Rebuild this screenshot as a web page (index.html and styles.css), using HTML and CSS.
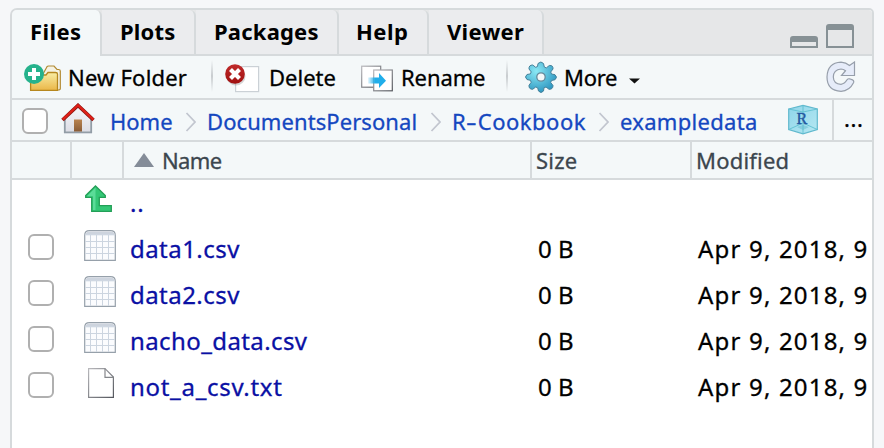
FILE: index.html
```
<!DOCTYPE html>
<html lang="en">
<head>
<meta charset="utf-8">
<title>Files</title>
<link rel="stylesheet" href="styles.css">
</head>
<body>
<svg class="defs" width="0" height="0" aria-hidden="true">
  <defs>
    <linearGradient id="gold" x1="0" y1="0" x2="0" y2="1"><stop offset="0" stop-color="#f8eda4"/><stop offset="1" stop-color="#eab748"/></linearGradient>
    <linearGradient id="red" x1="0" y1="0" x2="0" y2="1"><stop offset="0" stop-color="#c02b2b"/><stop offset="1" stop-color="#a01010"/></linearGradient>
    <linearGradient id="page" x1="0" y1="0" x2="1" y2="1"><stop offset="0" stop-color="#b8b8bc"/><stop offset="1" stop-color="#55585e"/></linearGradient>
    <linearGradient id="arrow" x1="0" y1="0" x2="1" y2="0"><stop offset="0" stop-color="#20aeea" stop-opacity="0.1"/><stop offset="0.4" stop-color="#20aeea"/></linearGradient>
    <radialGradient id="gear" cx="0.35" cy="0.3" r="0.75"><stop offset="0" stop-color="#8be9f5"/><stop offset="1" stop-color="#2b94bf"/></radialGradient>
    <linearGradient id="wall" x1="0" y1="0" x2="0" y2="1"><stop offset="0" stop-color="#f6f6fa"/><stop offset="1" stop-color="#dcdce4"/></linearGradient>
    <linearGradient id="door" x1="0" y1="0" x2="0" y2="1"><stop offset="0" stop-color="#b98350"/><stop offset="1" stop-color="#8a5c38"/></linearGradient>
    <linearGradient id="cube" x1="0" y1="0" x2="1" y2="1"><stop offset="0" stop-color="#8fd5ea"/><stop offset="1" stop-color="#b5e8f2"/></linearGradient>
    <g id="grid">
      <path d="M.7 30.400V5.500Q.7 .7 5.500 .7H26.500Q31.300 .7 31.300 5.500V30.400Z" fill="#fbfcfe" stroke="#96a0aa" stroke-width="1.200"/>
      <path d="M1.400 4.800Q2 1.400 6 1.400H26Q30 1.400 30.600 4.800Z" fill="#cdd4de"/>
      <path d="M6.500 5V29.800M12.500 5V29.800M18.500 5V29.800M24.500 5V29.800M1.400 4.800H30.600M1.400 11.500H30.600M1.400 17.500H30.600M1.400 23.500H30.600" fill="none" stroke="#ccd5e0" stroke-width="1"/>
    </g>
  </defs>
</svg>
<main class="pane">
  <nav class="tabs">
    <a class="tab tab-files active"><span>Files</span></a>
    <a class="tab tab-plots"><span>Plots</span></a>
    <a class="tab tab-packages"><span>Packages</span></a>
    <a class="tab tab-help"><span>Help</span></a>
    <a class="tab tab-viewer"><span>Viewer</span></a>
    <svg class="window-controls" width="64" height="24" viewBox="0 0 64 24">
      <path d="M0 24V15Q0 12 3 12H25Q28 12 28 15V24ZM2 18V22H26V18Z" fill="#879195" fill-rule="evenodd"/>
      <path d="M36 24V3Q36 0 39 0H61Q64 0 64 3V24ZM38 6V22H62V6Z" fill="#879195" fill-rule="evenodd"/>
    </svg>
  </nav>
  <div class="toolbar">
    <button class="tool new-folder">
      <svg width="38" height="28" viewBox="0 0 38 28">
        <path d="M19 10L23 2.700Q23.500 2 24.500 2H30L33 5.500H34.500Q36.300 5.500 36.300 7V24.500Q36.300 26 34 26H20Z" fill="#f5f2e2" stroke="#b28a32" stroke-width="1.200"/>
        <path d="M6.600 26.300V11H22L24 8.500H31.500Q33.500 8.500 33.500 10V26.300Z" fill="url(#gold)" stroke="#b6871e" stroke-width="1.300"/>
        <circle cx="10" cy="10" r="10" fill="#25b28c"/>
        <path d="M10 4V16M4 10H16" stroke="#fff" stroke-width="4"/>
      </svg>
      <span>New Folder</span>
    </button>
    <i class="sep sep-one"></i>
    <button class="tool delete">
      <svg width="36" height="30" viewBox="0 0 36 30">
        <rect x="10.600" y="2.600" width="23" height="25" fill="#fff" stroke="#cbd1d6" stroke-width="1.200"/>
        <circle cx="11" cy="12" r="9.500" fill="#777" opacity=".3"/>
        <circle cx="10" cy="10" r="9.800" fill="url(#red)"/>
        <path d="M5.500 5.500L14.500 14.500M14.500 5.500L5.500 14.500" stroke="#fff" stroke-width="4.200"/>
      </svg>
      <span>Delete</span>
    </button>
    <button class="tool rename">
      <svg width="32" height="28" viewBox="0 0 32 28">
        <rect x=".700" y="1.200" width="19" height="21" fill="#fff" stroke="url(#page)" stroke-width="1.200"/>
        <rect x="12.700" y="5" width="18.600" height="20.800" fill="#fff" stroke="url(#page)" stroke-width="1.200"/>
        <path d="M7 12.500H18V8L25 15.700L18 23V18.500H7Z" fill="url(#arrow)"/>
      </svg>
      <span>Rename</span>
    </button>
    <i class="sep sep-two"></i>
    <button class="tool more">
      <svg width="32" height="32" viewBox="0 0 32 32">
        <path d="M13 2.500Q16 -.5 18.500 2.500L19.300 6L21.300 6.900L24.300 4.500Q28.300 4 28 8L25.700 11L26.500 13L30 13.700Q33 16.200 30 18.700L26.500 19.500L25.700 21.500L28 24.500Q28 28.500 24 28.300L21 26L19 26.800L18.500 30Q16 33 13.500 30L12.700 26.800L10.700 26L7.700 28.300Q3.700 28.300 4 24.300L6.200 21.300L5.400 19.300L2 18.500Q-1 16 2 13.500L5.400 12.900L6.200 10.900L4 8Q3.700 4 7.700 4L10.700 6.300L12.500 5.500Z" fill="url(#gear)" stroke="#45819a" stroke-width="1"/>
        <circle cx="16" cy="16" r="4.200" fill="#f4f8f9" stroke="#66899a" stroke-width="1.300"/>
      </svg>
      <span>More</span>
      <svg class="caret" width="11" height="6" viewBox="0 0 11 6"><path d="M0 .500H11L5.500 5.600Z" fill="#111"/></svg>
    </button>
    <svg class="refresh" width="30" height="32" viewBox="0 0 30 32">
      <path d="M23.500 4.500L28.500 1V14.500H15.500L19.500 9.700Q17.500 8 15 8Q7.500 8.600 7.300 16Q7.500 23 15 23.300Q18.500 23 21 18.800Q22 17.500 23.500 17.800L26.500 18.900Q28.300 19.800 27.500 21.800Q23.500 30 15 30.300Q1 29.500 1 16Q1.500 1.800 15 1.200Q20 1.500 23.500 4.500Z" fill="#e6ecf9" stroke="#979fab" stroke-width="1.200"/>
    </svg>
  </div>
  <div class="crumbs">
    <i class="check"></i>
    <svg class="home" width="34" height="32" viewBox="0 0 34 32">
      <path d="M3 16L17 3L31 16V30.300H3Z" fill="url(#wall)"/>
      <path d="M3.800 16V29.400H30.200V16" fill="none" stroke="#929da6" stroke-width="1.800"/>
      <rect x="13" y="16.500" width="8" height="12" fill="url(#door)"/>
      <path d="M1.500 17L17 2.400L32.500 17" fill="none" stroke="#8b1712" stroke-width="3.600"/>
      <path d="M1.700 16.600L17 2.200L32.300 16.600" fill="none" stroke="#e02018" stroke-width="2.200"/>
    </svg>
    <a class="c-home">Home</a>
    <svg class="chev" width="12" height="20" viewBox="0 0 12 20"><path d="M1.500 1L10 10L1.500 19" fill="none" stroke="#c2c6cf" stroke-width="1.800"/></svg>
    <a class="c-docs">DocumentsPersonal</a>
    <svg class="chev" width="12" height="20" viewBox="0 0 12 20"><path d="M1.500 1L10 10L1.500 19" fill="none" stroke="#c2c6cf" stroke-width="1.800"/></svg>
    <a class="c-book">R<span class="hyphen">-</span>Cookbook</a>
    <svg class="chev" width="12" height="20" viewBox="0 0 12 20"><path d="M1.500 1L10 10L1.500 19" fill="none" stroke="#c2c6cf" stroke-width="1.800"/></svg>
    <a class="c-data">exampledata</a>
    <svg class="project" width="30" height="32" viewBox="0 0 30 32">
      <path d="M.700 5L15 1.300L29.300 5V25.500L15 29.800L.700 25.500Z" fill="url(#cube)" stroke="#61b9ce" stroke-width="1.200"/>
      <path d="M.700 5L15 8L29.300 5M15 1V30M.700 25.500L15 19L29.300 25.500" fill="none" stroke="#5fbfd0" stroke-width=".9"/>
      <path d="M9 23L15 21L21 23L15 26Z" fill="#62bccd" opacity=".5"/>
      <text x="8.500" y="19.500" class="project-r">R</text>
    </svg>
    <button class="ellipsis">...</button>
  </div>
  <div class="grid-row head">
    <span></span><span></span>
    <span class="h-name"><svg width="20" height="14" viewBox="0 0 20 14"><path d="M0 14L10 0L20 14Z" fill="#848c98"/></svg><b>Name</b></span>
    <span class="h-size"><b>Size</b></span>
    <span class="h-mod"><b>Modified</b></span>
  </div>
  <div class="grid-row row parent">
    <span></span>
    <svg class="up" width="27" height="28" viewBox="0 0 27 28">
      <path d="M10.500 1L20.300 10.500V12.300H14.300V20.700H26.300V26.300H6.700V12.300H.700V10.500Z" fill="#34c776" stroke="#239f57" stroke-width="1.300"/>
      <path d="M10.500 2.500L2 11.300H8V25H10.500Z" fill="#5bdc98"/>
    </svg>
    <a class="dots">..</a>
  </div>
  <div class="grid-row row"><i class="check"></i><svg class="file" width="32" height="32" viewBox="0 0 32 32"><use href="#grid"/></svg><a class="f-data">data1.csv</a><span class="size">0 B</span><span class="date">Apr 9, 2018, 9</span></div>
  <div class="grid-row row"><i class="check"></i><svg class="file" width="32" height="32" viewBox="0 0 32 32"><use href="#grid"/></svg><a class="f-data">data2.csv</a><span class="size">0 B</span><span class="date">Apr 9, 2018, 9</span></div>
  <div class="grid-row row"><i class="check"></i><svg class="file" width="32" height="32" viewBox="0 0 32 32"><use href="#grid"/></svg><a class="f-nacho">nacho_data.csv</a><span class="size">0 B</span><span class="date">Apr 9, 2018, 9</span></div>
  <div class="grid-row row"><i class="check"></i><svg class="file" width="32" height="32" viewBox="0 0 32 32"><path d="M4.600 .600H21L29.400 9V29.400H4.600Z" fill="#fff" stroke="url(#page)" stroke-width="1.200"/><path d="M21 .600V9.300H29.400" fill="none" stroke="#85878b" stroke-width="1.200"/></svg><a class="f-not">not_a_csv.txt</a><span class="size">0 B</span><span class="date">Apr 9, 2018, 9</span></div>
</main>
</body>
</html>
```
FILE: styles.css
```
* { box-sizing: border-box; }
body {
  margin: 0;
  height: 448px;
  overflow: hidden;
  padding: 8px 10px 0;
  background: #f6f7f9;
  color: #000;
  font: 22px/30px "Noto Sans", sans-serif;
  white-space: nowrap;
  -webkit-text-stroke: 0.3px;
}
.defs { position: absolute; }
svg { display: block; flex: none; }
button { border: 0; padding: 0; background: none; font: inherit; color: inherit; }
.pane {
  width: 864px;
  height: 460px;
  border: 2px solid #d6dadc;
  border-radius: 7px 5px 0 0;
  background: #fff;
  overflow: hidden;
}
.tabs { display: flex; height: 46px; background: #e6e7e8; }
.tab {
  height: 46px;
  padding-top: 6px;
  border-right: 2px solid #d6dadc;
  border-bottom: 2px solid #d6dadc;
  border-top-right-radius: 6px;
  background: #ebecee;
  font-weight: 700;
  -webkit-text-stroke: 0;
}
.tab.active { background: #f4f8f9; border-bottom: 0; }
.tab-files { width: 90px; padding-left: 18px; letter-spacing: .4px; }
.tab-plots { width: 94px; padding-left: 18px; letter-spacing: .2px; }
.tab-packages { width: 143px; padding-left: 18px; letter-spacing: .2px; }
.tab-help { width: 90px; padding-left: 17px; letter-spacing: .5px; }
.tab-viewer { width: 115px; padding-left: 18px; letter-spacing: .3px; }
.tabs::after { content: ""; order: 1; flex: 1; border-bottom: 2px solid #d6dadc; }
.window-controls { order: 2; width: 82px; height: 46px; padding: 14px 18px 6px 0; border-bottom: 2px solid #d6dadc; }
.toolbar {
  display: flex;
  align-items: flex-start;
  height: 44px;
  background: #f4f8f9;
  border-bottom: 2px solid #d6dadc;
}
.tool { display: flex; text-align: left; height: 42px; }
.tool span { padding-top: 6px; }
.tool svg { margin-top: 8px; }
.new-folder { width: 199px; padding-left: 12px; letter-spacing: .2px; }
.new-folder span { margin-left: 6px; }
.sep { width: 2px; height: 32px; margin-top: 4px; background: linear-gradient(#f4f8f9, #c8cccf 50%, #f4f8f9); }
.delete { width: 148px; padding-left: 12px; }
.delete span { margin-left: 8px; }
.rename { width: 145px; letter-spacing: -.1px; }
.rename svg { margin-top: 9px; }
.rename span { margin-left: 8px; }
.more { width: 318px; padding-left: 17px; letter-spacing: -.3px; }
.more svg { margin-top: 5px; }
.more span { width: 65px; margin-left: 7px; }
.more .caret { margin-top: 22px; margin-left: 0; }
.refresh { margin-top: 5px; }
.crumbs {
  display: flex;
  height: 42px;
  background: #f4f8f9;
  border-bottom: 2px solid #d6dadc;
  color: #1447c0;
}
.crumbs a { flex: none; padding-top: 6px; }
.check {
  display: block;
  width: 26px;
  height: 26px;
  border: 2px solid #b0b0b0;
  border-radius: 6px;
  background: #fff;
}
.crumbs .check { margin: 8px 0 0 10px; }
.home { margin: 3px 15px 0 13px; }
.c-home { width: 75px; }
.c-docs { width: 223px; letter-spacing: .08px; }
.c-book { width: 146px; letter-spacing: .5px; }
.hyphen { display: inline-block; transform: scaleX(1.5); margin: 0 2.500px 0 1.500px; }
.c-data { width: 168px; letter-spacing: .3px; }
.chev { margin: 12px 10px 0 0; }
.project { margin-top: 4px; }
.project-r { font: 16px "Liberation Serif", serif; fill: #2357a0; stroke: #2357a0; stroke-width: .4; }
.ellipsis { flex: 1; text-align: left; margin-left: 14px; padding: 0 0 4px 10px; border-left: 2px solid #d6dadc; color: #000; letter-spacing: .6px; }
.grid-row { display: grid; grid-template-columns: 60px 52px 408px 160px 180px; height: 46px; }
.head { height: 38px; background: #f4f8f9; border-bottom: 2px solid #d6dadc; color: #3c464e; }
.head > span { border-right: 2px solid #d6dadc; padding-top: 3px; }
.head > span:last-child { border: 0; }
.head b { font-weight: 400; }
.h-name { display: flex; letter-spacing: -.6px; }
.h-name svg { margin: 8px 8px 0 10px; }
.head .h-size, .head .h-mod { padding-left: 4px; letter-spacing: .2px; }
.row { font-size: 24px; }
.row a { color: #0a10a4; }
.row a, .size, .date { padding-top: 10px; padding-left: 6px; }
.f-data { letter-spacing: .45px; }
.f-nacho { letter-spacing: .4px; }
.f-not { letter-spacing: .7px; }
.date { letter-spacing: 1.180px; }
.row .check { margin: 10px 0 0 16px; }
.row .file { margin: 6px 0 0 12px; }
.parent { height: 44px; }
.up { margin: 5px 0 0 13px; }
.row .dots { padding-top: 8px; letter-spacing: .8px; }
```
